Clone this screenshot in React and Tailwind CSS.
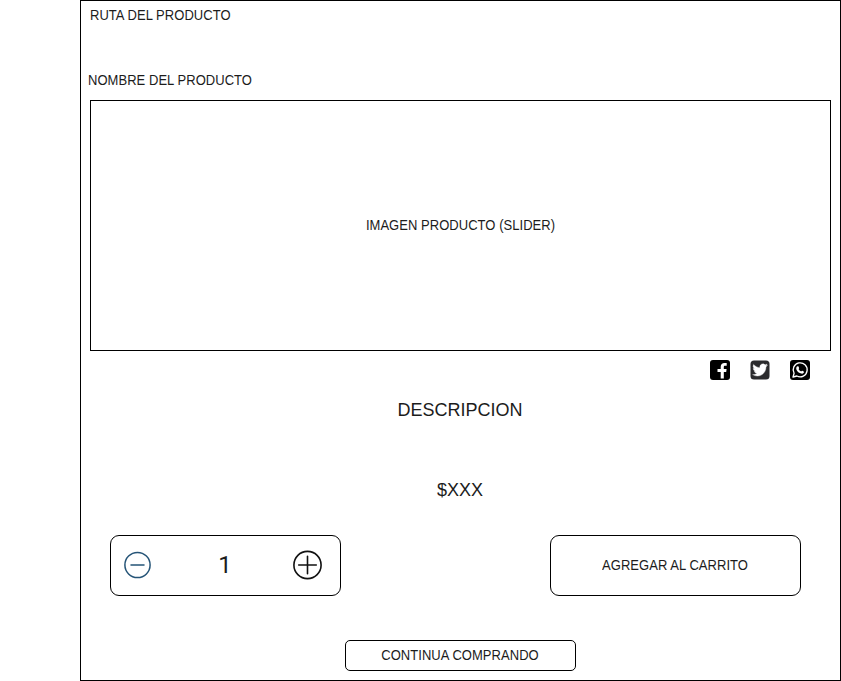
function FacebookIcon() {
  return (
    <svg className="h-5 w-5" viewBox="0 0 20 20">
      <rect width="20" height="20" rx="3" fill="#000" />
      <path d="M10.700 18.600V12H7.500V9.100H10.700V7C10.700 4.300 12.200 3 14.500 3h2.200v2.800h-1.500c-1.100 0-1.400.5-1.400 1.400v1.900h2.800l-.4 2.900h-2.400v6.600z" fill="#fff" />
    </svg>
  );
}

function TwitterIcon() {
  return (
    <svg className="h-5 w-5" viewBox="0 0 20 20">
      <rect x="0.500" y="0.500" width="19" height="19" rx="3.500" fill="#2b2b2d" />
      <path
        transform="translate(2.600 2.500) scale(0.620)"
        stroke="#fff"
        strokeWidth="0.600"
        d="M23.950 4.570a10 10 0 0 1-2.820.780 4.960 4.960 0 0 0 2.160-2.730c-.950.560-2 .960-3.130 1.190a4.920 4.920 0 0 0-8.380 4.480C7.690 8.090 4.070 6.130 1.640 3.160a4.920 4.920 0 0 0 1.520 6.570 4.900 4.900 0 0 1-2.230-.610v.060a4.920 4.920 0 0 0 3.950 4.830 5 5 0 0 1-2.210.080 4.940 4.940 0 0 0 4.600 3.420A9.870 9.870 0 0 1 0 19.540a14 14 0 0 0 7.550 2.210c9.050 0 14-7.500 14-13.980 0-.210 0-.420-.020-.630a9.940 9.940 0 0 0 2.420-2.570z"
        fill="#fff"
      />
    </svg>
  );
}

function WhatsappIcon() {
  return (
    <svg className="h-5 w-5" viewBox="0 0 20 20">
      <rect width="20" height="20" rx="3" fill="#000" />
      <path d="M3 17l1.100-3.700A7 7 0 1 1 6.900 16z" fill="none" stroke="#fff" strokeWidth="1.300" strokeLinejoin="round" />
      <path d="M7.400 6.300c.4-.3.900-.2 1.100.2l.6 1.400c.1.300 0 .5-.6 1.200.6 1.200 1.500 2 2.600 2.500.7-.8.900-1 1.200-.8l1.400.7c.4.200.3.8 0 1.300-.5.700-1.500 1-2.300.8-2.400-.6-4.200-2.200-5-4.200-.4-1.200 0-2.500 1-3.100z" fill="#fff" />
    </svg>
  );
}

function MinusIcon() {
  return (
    <svg className="h-[30px] w-[30px]" viewBox="0 0 30 30" fill="none" stroke="#255477" strokeWidth="1.500">
      <circle cx="15.500" cy="15" r="12.600" />
      <path d="M9 15h13" strokeLinecap="round" />
    </svg>
  );
}

function PlusIcon() {
  return (
    <svg className="h-[30px] w-[30px]" viewBox="0 0 30 30" fill="none" stroke="#111" strokeWidth="1.600">
      <circle cx="15.500" cy="15" r="13.600" />
      <path d="M6.700 15h17.600M15.500 6.200v17.600" strokeLinecap="round" />
    </svg>
  );
}

function Label({ children }) {
  return <span className="inline-block scale-y-[1.080] tracking-[0.04px]">{children}</span>;
}

export default function App() {
  return (
    <div className="h-[681px] w-[841px] bg-white pl-20 font-['Liberation_Sans',Arial,sans-serif] text-[13px] leading-5 text-[#1c1c1c]">
      <main className="flex h-[681px] w-[761px] flex-col border border-black px-[9px]">
        <nav className="mt-[5px] h-5"><Label>RUTA DEL PRODUCTO</Label></nav>
        <h1 className="-ml-0.5 mt-[45px] h-5"><Label>NOMBRE DEL PRODUCTO</Label></h1>
        <section className="mt-[9px] flex h-[251px] w-[741px] shrink-0 items-center justify-center border border-black">
          <Label>IMAGEN PRODUCTO (SLIDER)</Label>
        </section>
        <div className="mt-[9px] flex h-5 justify-end gap-5 pr-[21px]">
          <FacebookIcon />
          <TwitterIcon />
          <WhatsappIcon />
        </div>
        <p className="mt-[15px] h-[30px] pr-px text-center text-lg leading-[30px]">DESCRIPCION</p>
        <p className="mt-[50px] h-[30px] pr-px text-center text-lg leading-[30px]">$XXX</p>
        <div className="mt-[30px] flex h-[61px] shrink-0 justify-between pl-5 pr-[30px]">
          <div className="flex w-[231px] items-center rounded-[9px] border border-black pl-[11px] pr-[18px]">
            <button className="-mt-px"><MinusIcon /></button>
            <span className="-mt-px flex-1 pl-[6px] text-center font-['Roboto',sans-serif] text-2xl">1</span>
            <button className="-mt-px"><PlusIcon /></button>
          </div>
          <button className="w-[251px] rounded-[9px] border border-black pr-px"><Label>AGREGAR AL CARRITO</Label></button>
        </div>
        <button className="mt-11 h-[31px] w-[231px] shrink-0 self-center rounded-[5px] border border-black pr-px">
          <Label>CONTINUA COMPRANDO</Label>
        </button>
      </main>
    </div>
  );
}
